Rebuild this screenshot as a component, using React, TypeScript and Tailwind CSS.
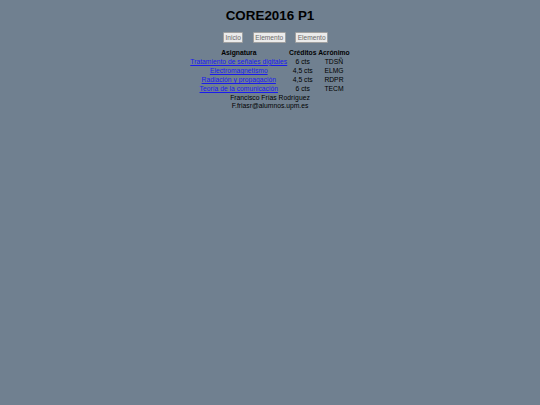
export default function App() {
  const rows = [
    ["Tratamiento de señales digitales", "6 cts", "TDSÑ"],
    ["Electromagnetismo", "4,5 cts", "ELMG"],
    ["Radiación y propagación", "4,5 cts", "RDPR"],
    ["Teoría de la comunicación", "6 cts", "TECM"],
  ];
  return (
    <div className="w-[540px] min-h-[405px] bg-[#708090] text-black font-['Liberation_Sans',Arial,sans-serif] flex flex-col items-center">
      <h1 className="mt-[8.4px] mb-[8.4px] text-[13.4px] leading-[15.5px] font-bold">CORE2016 P1</h1>
      <div className="flex gap-[9.5px] ml-[11px]">
        {["Inicio", "Elemento", "Elemento"].map((b, i) => (
          <button
            key={i}
            className="bg-[#ebebeb] border border-[#a0a0a0] text-[#6a6a6a] text-[6.6px] leading-[7.5px] px-[1.5px] py-[0.5px] rounded-[1px]"
          >
            {b}
          </button>
        ))}
      </div>
      <table className="mt-[4.5px] text-[6.75px] leading-[7.4px] border-separate border-spacing-[1px]">
        <thead>
          <tr>
            <th className="px-[0.4px] py-[0.4px] font-bold">Asignatura</th>
            <th className="px-[0.4px] py-[0.4px] font-bold">Créditos</th>
            <th className="px-[0.4px] py-[0.4px] font-bold">Acrónimo</th>
          </tr>
        </thead>
        <tbody>
          {rows.map((r, i) => (
            <tr key={i}>
              <td className="px-[0.4px] py-[0.4px] text-center">
                <a href="#" className="text-[#1a1aee] underline decoration-[0.5px]">{r[0]}</a>
              </td>
              <td className="px-[0.4px] py-[0.4px] text-center">{r[1]}</td>
              <td className="px-[0.4px] py-[0.4px] text-center">{r[2]}</td>
            </tr>
          ))}
        </tbody>
      </table>
      <div className="text-[6.75px] leading-[7.6px] text-center">
        <div>Francisco Frías Rodríguez</div>
        <div>F.friasr@alumnos.upm.es</div>
      </div>
    </div>
  );
}
